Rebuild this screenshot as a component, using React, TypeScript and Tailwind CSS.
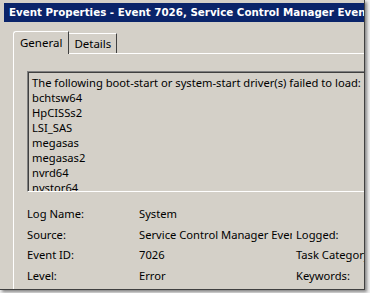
import React from "react"

const ui = { fontFamily: '"Noto Sans", "Open Sans", sans-serif' }
const title = { fontFamily: '"DejaVu Sans", Verdana, sans-serif' }

const lines = [
  "The following boot-start or system-start driver(s) failed to load:",
  "bchtsw64",
  "HpCISSs2",
  "LSI_SAS",
  "megasas",
  "megasas2",
  "nvrd64",
  "nvstor64",
]

function EventIcon() {
  return (
    <svg width="16" height="16" viewBox="0 0 16 16">
      <rect x="2.5" y="0.5" width="11" height="15" fill="#f4f6fa" stroke="#5a6d96" />
      <rect x="3" y="1" width="2" height="14" fill="#9fb2d6" />
      <path d="M1 2.5h3M1 5.5h3M1 8.5h3M1 11.5h3M1 14h3" stroke="#2b3f75" strokeWidth="1" />
      <path d="M7 6.5h5M7 8.5h5" stroke="#a0a8c0" />
      <path d="M10.5 0.5 L15 8 L6 8 Z" fill="#f5d21a" stroke="#8a6d00" strokeWidth="0.6" />
      <rect x="10" y="3" width="1" height="3" fill="#222" />
      <rect x="10" y="6.5" width="1" height="1" fill="#222" />
      <circle cx="5" cy="12" r="3" fill="#d8242a" stroke="#7a0e10" strokeWidth="0.6" />
      <rect x="3.5" y="11.3" width="3" height="1.4" fill="#fff" />
    </svg>
  )
}

export default function App() {
  return (
    <div className="w-[370px] h-[293px] bg-[#f0f0f0] overflow-hidden" style={ui}>
      <div className="w-[365px] h-[290px] bg-[#d4d0c8] border-r border-b border-[#404040] shadow-[2px_2px_3px_rgba(0,0,0,0.45)] flex flex-col overflow-hidden">
        {/* title bar */}
        <div className="mt-[3px] ml-[4px] h-[19px] bg-[#0a246a] flex items-center gap-[3px] pl-[2px] overflow-hidden whitespace-nowrap">
          <EventIcon />
          <span className="text-white font-bold text-[10.3px] leading-none" style={title}>
            Event Properties - Event 7026, Service Control Manager Event
          </span>
        </div>

        {/* tabs */}
        <div className="mt-[9px] pl-[13px] flex items-end h-[22px] text-[11.5px] text-black">
          <div className="h-[23px] -mb-px relative z-10 bg-[#d4d0c8] border-l border-t border-white rounded-tl-[3px] border-r border-r-[#404040] px-[6px] pt-[2px] leading-[18px]">
            General
          </div>
          <div className="h-[20px] border-t border-white border-r border-r-[#404040] px-[5px] pt-[1px] leading-[18px]">
            Details
          </div>
        </div>

        {/* panel */}
        <div className="ml-[13px] flex-1 border-l border-t border-white flex flex-col pl-[13px] pt-[17px] text-[11.2px] text-black">
          <div className="h-[121px] border-t border-l border-[#808080] border-b border-b-white overflow-hidden">
            <div className="h-full border-t border-l border-[#404040] pl-[3px] pt-[2px] leading-[15px] whitespace-nowrap">
              {lines.map((l) => (
                <div key={l}>{l}</div>
              ))}
            </div>
          </div>

          <div className="mt-[14px] grid grid-cols-[112px_157px_80px] gap-y-[4.7px] leading-[16px] whitespace-nowrap">
            <span>Log Name:</span>
            <span>System</span>
            <span></span>
            <span>Source:</span>
            <span className="w-[153px] overflow-hidden">Service Control Manager Eventlog</span>
            <span>Logged:</span>
            <span>Event ID:</span>
            <span>7026</span>
            <span>Task Category:</span>
            <span>Level:</span>
            <span>Error</span>
            <span>Keywords:</span>
          </div>
        </div>
      </div>
    </div>
  )
}
